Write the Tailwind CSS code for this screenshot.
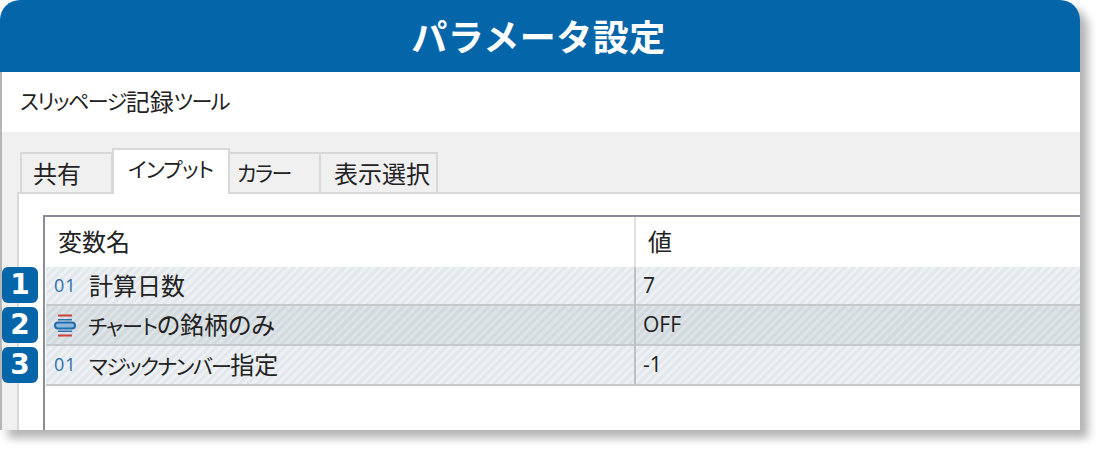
<!DOCTYPE html>
<html lang="ja">
<head>
    <meta charset="UTF-8">
    <script src="https://cdn.jsdelivr.net/npm/@tailwindcss/browser@4"></script>
    <title>パラメータ設定</title>
</head>
<body class="bg-white">
    <div class="w-[1100px] h-[450px] overflow-hidden font-['Noto_Sans_CJK_JP','Noto_Sans',sans-serif] [font-feature-settings:'palt'] text-[#222]">
        <!--Window-->
        <div class="relative w-[1080px] h-[430px] flex flex-col rounded-t-[20px] shadow-[8px_8px_10px_rgba(0,0,0,0.3)] bg-white">
            <!--Title-->
            <div class="h-[72px] shrink-0 bg-[#0565a9] rounded-t-[20px] flex items-center justify-center pr-[3px] pb-[2px] text-white text-[36px] font-bold tracking-[0.5px] [font-feature-settings:normal]">パラメータ設定</div>

            <div class="flex-1 min-h-0 flex flex-col border-l-2 border-[#b5b5b5] overflow-hidden">
                <div class="h-[60px] shrink-0 flex items-center pl-[18px] pb-[3px] text-[24px]"><span class="text-[21px] tracking-[-1.5px]">スリッページ</span>記録<span class="text-[21px] tracking-[-1.5px]">ツール</span></div>

                <div class="flex-1 min-h-0 bg-[#f0f0f0] pl-[15px] flex flex-col">
                    <!--Tabs-->
                    <div class="h-[62px] shrink-0 flex items-end pl-[3px] text-[24px] relative z-10 -mb-[2px]">
                        <div class="w-[93px] h-[42px] border-2 border-b-0 border-[#d8d8d8] pl-[11px] pb-[2px] flex items-center">共有</div>
                        <div class="w-[118px] h-[46px] -ml-px border-2 border-b-0 border-[#d8d8d8] bg-white pl-[14px] pb-[6px] flex items-center text-[21px] tracking-[-0.6px]">インプット</div>
                        <div class="w-[92px] h-[42px] -ml-px border-2 border-l-0 border-b-0 border-[#d8d8d8] pl-[8px] pb-[2px] flex items-center text-[21px] tracking-[-1.5px]">カラー</div>
                        <div class="w-[117px] h-[42px] border-2 border-l-0 border-b-0 border-[#d8d8d8] pl-[13px] pb-[2px] flex items-center">表示選択</div>
                    </div>

                    <!--Panel-->
                    <div class="flex-1 min-h-0 bg-white border-t-2 border-l-2 border-[#d8d8d8] pt-[21px] pl-[24px]">
                        <div class="h-full border-t-2 border-l-2 border-[#8a8d99] pl-px">
                            <div class="h-[50px] grid grid-cols-[590px_1fr] text-[24px]">
                                <div class="border-r-2 border-[#e2e2e2] pl-[12px] pb-[2px] flex items-center">変数名</div>
                                <div class="pl-[12px] pb-[2px] flex items-center">値</div>
                            </div>
                            <div class="h-[39px] grid grid-cols-[590px_1fr] text-[24px] border-b-2 border-[#c8c8c8] bg-[repeating-linear-gradient(135deg,#e2e8ec_0,#e2e8ec_3px,#edf1f4_3px,#edf1f4_6px)]">
                                <div class="border-r-2 border-[#b9c2c6] pl-[8px] flex items-center gap-[12px]">
                                    <span class="w-[23px] pb-[3px] text-[18px] tracking-[1px] text-[#2a72ad] font-['Open_Sans',sans-serif]">01</span>
                                    <span class="pb-[3px]">計算日数</span>
                                </div>
                                <div class="pl-[7px] pb-[2px] flex items-center text-[21px] font-['Open_Sans',sans-serif]">7</div>
                            </div>
                            <div class="h-[40px] grid grid-cols-[590px_1fr] text-[24px] border-b-2 border-[#c8c8c8] bg-[repeating-linear-gradient(135deg,#d2dadd_0,#d2dadd_3px,#dde3e6_3px,#dde3e6_6px)]">
                                <div class="border-r-2 border-[#b9c2c6] pl-[8px] flex items-center gap-[12px]">
                                    <svg class="w-[23px] h-[23px]" viewBox="0 0 23 23">
                                        <path d="M4 1.5H18M4 21.5H18" stroke="#c8413f" stroke-width="2.2" fill="none"/>
                                        <path d="M4 5.8H18M4 17.2H18" stroke="#2a72ad" stroke-width="1.5" fill="none"/>
                                        <rect x="1" y="8.5" width="20" height="6" rx="3" stroke="#1f6db0" stroke-width="2" fill="#8fb8d8"/>
                                    </svg>
                                    <span class="pb-[3px] -ml-px"><span class="text-[21px] tracking-[-1px]">チャート</span>の銘柄のみ</span>
                                </div>
                                <div class="pl-[7px] pb-[1px] flex items-center text-[21px] font-['Open_Sans',sans-serif]">OFF</div>
                            </div>
                            <div class="h-[40px] grid grid-cols-[590px_1fr] text-[24px] border-b-2 border-[#c8c8c8] bg-[repeating-linear-gradient(135deg,#e2e8ec_0,#e2e8ec_3px,#edf1f4_3px,#edf1f4_6px)]">
                                <div class="border-r-2 border-[#b9c2c6] pl-[8px] flex items-center gap-[12px]">
                                    <span class="w-[23px] pb-[3px] text-[18px] tracking-[1px] text-[#2a72ad] font-['Open_Sans',sans-serif]">01</span>
                                    <span class="pb-[3px]"><span class="text-[21px] tracking-[-1.6px]">マジックナンバー</span>指定</span>
                                </div>
                                <div class="pl-[7px] pb-[2px] flex items-center text-[21px] font-['Open_Sans',sans-serif]">-1</div>
                            </div>
                        </div>
                    </div>
                </div>
            </div>

            <!--Number badges over the window-->
            <div class="absolute left-[2px] top-[267px] w-9 h-9 rounded-md bg-[#0565a9] text-white text-[28px] font-bold flex items-center justify-center font-['DejaVu_Sans',sans-serif]">1</div>
            <div class="absolute left-[2px] top-[307px] w-9 h-9 rounded-md bg-[#0565a9] text-white text-[28px] font-bold flex items-center justify-center font-['DejaVu_Sans',sans-serif]">2</div>
            <div class="absolute left-[2px] top-[347px] w-9 h-9 rounded-md bg-[#0565a9] text-white text-[28px] font-bold flex items-center justify-center font-['DejaVu_Sans',sans-serif]">3</div>
        </div>
    </div>
</body>
</html>
